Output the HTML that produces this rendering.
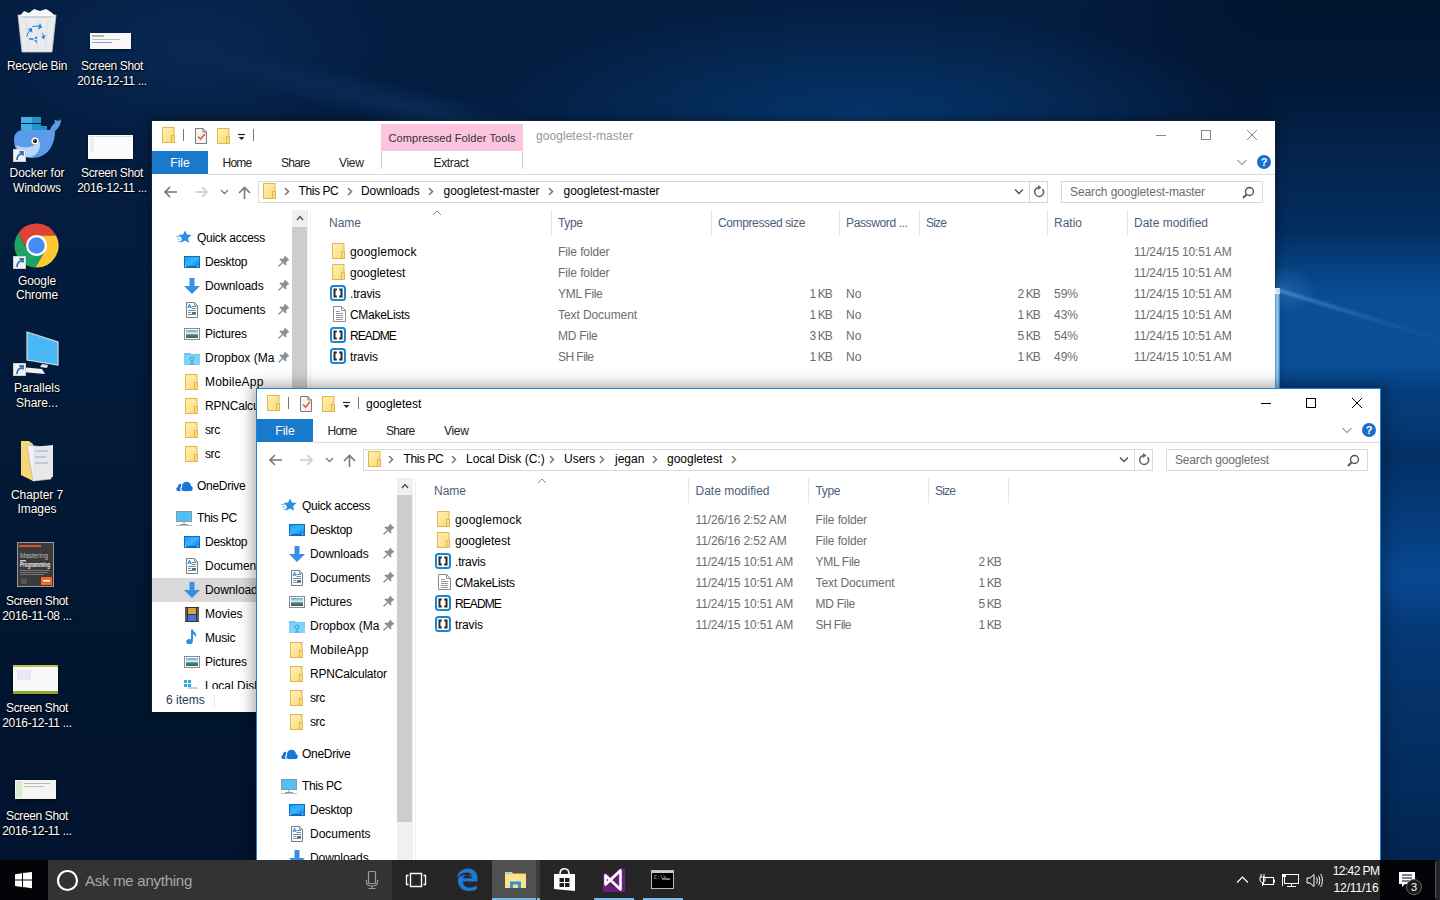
<!DOCTYPE html>
<html><head><meta charset="utf-8"><style>
html,body{margin:0;padding:0;width:1440px;height:900px;overflow:hidden;background:#061a36}
body{position:relative;font-family:'Liberation Sans', sans-serif}
.t{position:absolute;white-space:pre;font-family:'Liberation Sans', sans-serif}
svg{display:block;overflow:visible}
</style></head><body>
<div style="position:absolute;left:0;top:0;width:1440px;height:900px;background:#031c3e;background-image:radial-gradient(ellipse 380px 120px at 860px 125px, rgba(6,60,120,0.8), rgba(6,60,120,0) 100%),radial-gradient(ellipse 260px 200px at 1275px 0px, rgba(0,12,35,0.55), rgba(0,12,35,0) 100%),linear-gradient(180deg, #041e42 0%, #031c3e 30%, #021834 60%, #02142e 85%, #021330 100%);"></div><div style="position:absolute;left:180px;top:20px;width:520px;height:60px;transform:rotate(14deg);transform-origin:0 0;background:radial-gradient(ellipse 260px 22px at 260px 30px, rgba(30,90,170,0.22), rgba(30,90,170,0) 100%);"></div><div style="position:absolute;left:0px;top:0px;width:420px;height:160px;background:radial-gradient(ellipse 200px 100px at 190px 50px, rgba(20,70,140,0.25), rgba(20,70,140,0) 100%);"></div><div style="position:absolute;left:1270px;top:0;width:170px;height:860px;background:linear-gradient(180deg, rgb(0,20,46) 0px, rgb(1,26,58) 100px, rgb(3,35,75) 150px, rgb(4,45,95) 230px, rgb(6,62,125) 262px, rgb(9,78,150) 300px, rgb(9,78,150) 365px, rgb(5,62,125) 390px, rgb(5,58,118) 420px, rgb(3,48,100) 455px, rgb(5,60,125) 520px, rgb(8,72,145) 580px, rgb(5,58,120) 625px, rgb(4,50,104) 700px, rgb(3,42,90) 800px, rgb(3,36,78) 860px);"></div><div style="position:absolute;left:1240px;top:250px;width:120px;height:90px;background:radial-gradient(ellipse 40px 25px at 38px 40px, rgba(90,180,245,0.25), rgba(90,180,245,0) 100%);"></div><svg style="position:absolute;left:17px;top:8px;" width="40" height="46" viewBox="0 0 40 46"><path d="M1 7L39 7L35 44L5 44Z" fill="#e9ebed" stroke="#c4c9cd" stroke-width="0.8"/><path d="M1 7L39 7L33 10L7 10Z" fill="#cfd3d6"/><path d="M3 8L7 3L12 5L17 1L23 3L29 1L34 4L38 8Z" fill="#f7f8f9"/><path d="M20 44L20 12M12 44L9 12M28 44L31 12" stroke="#d6dadd" stroke-width="0.8"/><path d="M9.5 29L13 23L15.5 25L15 20L10.5 21L12.5 22L9 28Z M15 19L22 18.5L21 21.5L25 19.5L23 15L22 17.5L15.5 18Z M24 22L27.5 28L24 28.5L27 31.5L28.5 27L26 28L24.5 22.5Z M12 30L20 31L20 28L16 31.5L20 35L20 32.5L12 31.5Z" fill="#1f80e0"/></svg><div class="t" style="left:7.00px;top:59.34px;font-size:12px;line-height:14px;color:#fff;letter-spacing:-0.305px;text-shadow:0 0 2px #000,1px 1px 1px #000;">Recycle Bin</div><div style="position:absolute;left:90px;top:33px;width:41px;height:16px;background:#f7f7f7;box-shadow:0 1px 2px rgba(0,0,0,0.6)"></div><div style="position:absolute;left:92px;top:35px;width:12px;height:2px;background:#9c9"></div><div style="position:absolute;left:92px;top:39px;width:28px;height:1px;background:#bbb"></div><div style="position:absolute;left:92px;top:42px;width:20px;height:1px;background:#99c"></div><div class="t" style="left:81.00px;top:59.34px;font-size:12px;line-height:14px;color:#fff;letter-spacing:-0.368px;text-shadow:0 0 2px #000,1px 1px 1px #000;">Screen Shot</div><div class="t" style="left:77.25px;top:74.34px;font-size:12px;line-height:14px;color:#fff;letter-spacing:-0.309px;text-shadow:0 0 2px #000,1px 1px 1px #000;">2016-12-11 ...</div><svg style="position:absolute;left:13px;top:116px;" width="48" height="46" viewBox="0 0 48 46"><rect x="8" y="1" width="11" height="6" fill="#3fb2e0"/><rect x="19" y="1" width="9" height="6" fill="#1e94c9"/><rect x="8" y="8" width="11" height="6" fill="#3fb2e0"/><rect x="19" y="8" width="9" height="6" fill="#1e94c9"/><rect x="28" y="10" width="6" height="4" fill="#1e94c9"/><path d="M1 24C1 17 5 14 11 14L37 14C38 11 40 8 42 7C41 5 42 3 43 4C45 6 47 4 48 3C48 8 46 12 42 15C42 31 33 42 19 42C8 42 1 35 1 24Z" fill="#5b9be8"/><path d="M3 29C9 33 20 32 27 26C28 35 22 41 16 41C9 41 5 36 3 29Z" fill="#bcd7fa"/><circle cx="22" cy="25" r="3.6" fill="#fff"/><circle cx="22" cy="25" r="2" fill="#111"/><circle cx="21.3" cy="24.3" r="0.6" fill="#fff"/></svg><div style="position:absolute;left:13px;top:149px;width:13px;height:13px;background:#f2f2f2;border:1px solid #ccc;box-sizing:border-box"></div><svg style="position:absolute;left:14px;top:150px;" width="11" height="11" viewBox="0 0 11 11"><path d="M3 10C3 6 5 4 8 4M5.5 2H9V5.5" fill="none" stroke="#2f6fb8" stroke-width="1.8"/></svg><div class="t" style="left:9.50px;top:166.34px;font-size:12px;line-height:14px;color:#fff;letter-spacing:-0.036px;text-shadow:0 0 2px #000,1px 1px 1px #000;">Docker for</div><div class="t" style="left:13.00px;top:181.34px;font-size:12px;line-height:14px;color:#fff;letter-spacing:-0.098px;text-shadow:0 0 2px #000,1px 1px 1px #000;">Windows</div><div style="position:absolute;left:88px;top:135px;width:45px;height:24px;background:#fbfbfb;box-shadow:0 1px 2px rgba(0,0,0,0.6)"></div><div style="position:absolute;left:89px;top:136px;width:43px;height:1px;background:#ddd"></div><div style="position:absolute;left:90px;top:138px;width:4px;height:14px;background:#eee"></div><div class="t" style="left:81.00px;top:166.34px;font-size:12px;line-height:14px;color:#fff;letter-spacing:-0.368px;text-shadow:0 0 2px #000,1px 1px 1px #000;">Screen Shot</div><div class="t" style="left:77.25px;top:181.34px;font-size:12px;line-height:14px;color:#fff;letter-spacing:-0.309px;text-shadow:0 0 2px #000,1px 1px 1px #000;">2016-12-11 ...</div><svg style="position:absolute;left:14px;top:223px;" width="45" height="45" viewBox="0 0 45 45"><path d="M22.5 12.5L42.1 12.5A22 22 0 0 0 4.04 10.53L13.84 27.5L22.5 22.5Z" fill="#db4437"/><path d="M22.5 12.5L42.1 12.5A22 22 0 0 1 21.36 44.47L31.16 27.5L22.5 22.5Z" fill="#fcc934"/><path d="M31.16 27.5L21.36 44.47A22 22 0 0 1 4.04 10.53L13.84 27.5L22.5 22.5Z" fill="#1da462"/><circle cx="22.5" cy="22.5" r="10.5" fill="#fff"/><circle cx="22.5" cy="22.5" r="8.3" fill="#4a8af4"/></svg><div style="position:absolute;left:13px;top:256px;width:13px;height:13px;background:#f2f2f2;border:1px solid #ccc;box-sizing:border-box"></div><svg style="position:absolute;left:14px;top:257px;" width="11" height="11" viewBox="0 0 11 11"><path d="M3 10C3 6 5 4 8 4M5.5 2H9V5.5" fill="none" stroke="#2f6fb8" stroke-width="1.8"/></svg><div class="t" style="left:18.00px;top:274.34px;font-size:12px;line-height:14px;color:#fff;letter-spacing:-0.117px;text-shadow:0 0 2px #000,1px 1px 1px #000;">Google</div><div class="t" style="left:16.00px;top:288.34px;font-size:12px;line-height:14px;color:#fff;letter-spacing:-0.115px;text-shadow:0 0 2px #000,1px 1px 1px #000;">Chrome</div><svg style="position:absolute;left:18px;top:330px;" width="42" height="46" viewBox="0 0 42 46"><path d="M9 2L40 12V35L9 30Z" fill="#4ab8f5" stroke="#d8dde2" stroke-width="1.2"/><path d="M24 34L30 35L29 38L22 37Z" fill="#dfe3e7"/><path d="M3 37L24 39L27 44L4 42Z" fill="#eef0f2"/></svg><div style="position:absolute;left:13px;top:363px;width:13px;height:13px;background:#f2f2f2;border:1px solid #ccc;box-sizing:border-box"></div><svg style="position:absolute;left:14px;top:364px;" width="11" height="11" viewBox="0 0 11 11"><path d="M3 10C3 6 5 4 8 4M5.5 2H9V5.5" fill="none" stroke="#2f6fb8" stroke-width="1.8"/></svg><div class="t" style="left:14.00px;top:381.34px;font-size:12px;line-height:14px;color:#fff;text-shadow:0 0 2px #000,1px 1px 1px #000;">Parallels</div><div class="t" style="left:16.00px;top:395.84px;font-size:12px;line-height:14px;color:#fff;text-shadow:0 0 2px #000,1px 1px 1px #000;">Share...</div><svg style="position:absolute;left:20px;top:439px;" width="34" height="43" viewBox="0 0 34 43"><path d="M1 2L9 2L13 5L13 42L1 36Z" fill="#f6d774"/><path d="M7 6L31 9L31 40L13 42Z" fill="#f4f4f4" stroke="#bbb" stroke-width="0.8"/><path d="M13 8L33 6L33 38L13 42Z" fill="#e8e8e8"/><path d="M15 12H28M15 18H26M15 24H28" stroke="#7aa0e0" stroke-width="0.8"/></svg><div class="t" style="left:11.00px;top:487.84px;font-size:12px;line-height:14px;color:#fff;letter-spacing:-0.078px;text-shadow:0 0 2px #000,1px 1px 1px #000;">Chapter 7</div><div class="t" style="left:17.50px;top:502.34px;font-size:12px;line-height:14px;color:#fff;letter-spacing:-0.060px;text-shadow:0 0 2px #000,1px 1px 1px #000;">Images</div><svg style="position:absolute;left:17px;top:542px;" width="37" height="45" viewBox="0 0 37 45"><rect x="0.5" y="0.5" width="36" height="44" fill="#3b3b3b" stroke="#9a9a9a"/><rect x="2" y="3" width="22" height="2" fill="#d8572a"/><text x="3" y="16" font-family="Liberation Sans" font-size="7" fill="#bbb" textLength="28" lengthAdjust="spacingAndGlyphs">Mastering</text><rect x="3" y="18" width="6" height="1.5" fill="#ccc"/><text x="3" y="25" font-family="Liberation Sans" font-weight="bold" font-size="6.5" fill="#eee" textLength="30" lengthAdjust="spacingAndGlyphs">Programming</text><rect x="3" y="28" width="30" height="1" fill="#777"/><rect x="3" y="30" width="28" height="1" fill="#777"/><rect x="3" y="32" width="24" height="1" fill="#777"/><rect x="5" y="38" width="4" height="3" fill="none" stroke="#999" stroke-width="0.6"/><rect x="24" y="35" width="11" height="8" fill="#f26a25"/><rect x="26" y="38" width="7" height="1.5" fill="#fff"/></svg><div class="t" style="left:6.00px;top:594.34px;font-size:12px;line-height:14px;color:#fff;letter-spacing:-0.368px;text-shadow:0 0 2px #000,1px 1px 1px #000;">Screen Shot</div><div class="t" style="left:2.25px;top:609.34px;font-size:12px;line-height:14px;color:#fff;letter-spacing:-0.309px;text-shadow:0 0 2px #000,1px 1px 1px #000;">2016-11-08 ...</div><div style="position:absolute;left:13px;top:665px;width:45px;height:29px;background:#f8f8f8;box-shadow:0 1px 2px rgba(0,0,0,0.6)"></div><div style="position:absolute;left:13px;top:665px;width:45px;height:2px;background:#b8c840"></div><div style="position:absolute;left:13px;top:691px;width:45px;height:3px;background:#8aa830"></div><div style="position:absolute;left:17px;top:670px;width:14px;height:10px;background:#e8e8f4"></div><div class="t" style="left:6.00px;top:701.34px;font-size:12px;line-height:14px;color:#fff;letter-spacing:-0.368px;text-shadow:0 0 2px #000,1px 1px 1px #000;">Screen Shot</div><div class="t" style="left:2.25px;top:716.34px;font-size:12px;line-height:14px;color:#fff;letter-spacing:-0.309px;text-shadow:0 0 2px #000,1px 1px 1px #000;">2016-12-11 ...</div><div style="position:absolute;left:15px;top:780px;width:41px;height:19px;background:#f4f4f0;box-shadow:0 1px 2px rgba(0,0,0,0.6)"></div><div style="position:absolute;left:16px;top:781px;width:6px;height:17px;background:#d8ecd0"></div><div style="position:absolute;left:24px;top:783px;width:26px;height:1px;background:#bbb"></div><div style="position:absolute;left:24px;top:786px;width:20px;height:1px;background:#bbb"></div><div class="t" style="left:6.00px;top:808.84px;font-size:12px;line-height:14px;color:#fff;letter-spacing:-0.368px;text-shadow:0 0 2px #000,1px 1px 1px #000;">Screen Shot</div><div class="t" style="left:2.25px;top:823.84px;font-size:12px;line-height:14px;color:#fff;letter-spacing:-0.309px;text-shadow:0 0 2px #000,1px 1px 1px #000;">2016-12-11 ...</div><div style="position:absolute;left:151px;top:120px;width:1125px;height:592px;background:rgba(25,35,50,0.55);box-shadow:0 0 10px 2px rgba(0,0,0,0.25);"></div><div style="position:absolute;left:152px;top:121px;width:1123px;height:591px;background:#fff;overflow:hidden;"><svg style="position:absolute;left:10px;top:6px;" width="14" height="17" viewBox="0 0 14 17"><defs><linearGradient id="fg" x1="0" y1="0" x2="1" y2="1"><stop offset="0" stop-color="#fff0b8"/><stop offset="1" stop-color="#fcd977"/></linearGradient></defs><rect x="0.5" y="0.5" width="11.5" height="15" fill="url(#fg)" stroke="#e3b74c"/><rect x="9.5" y="8.5" width="3" height="7" fill="#fbdc7e" stroke="#e3b74c"/></svg><div style="position:absolute;left:31px;top:8px;width:1px;height:12px;background:#777"></div><svg style="position:absolute;left:43px;top:7px;" width="13" height="17" viewBox="0 0 13 17"><path d="M0.5 0.5H8L11.5 4V15.5H0.5Z" fill="#f3f3f3" stroke="#7a7a7a"/><path d="M8 0.5V4H11.5" fill="none" stroke="#7a7a7a"/><path d="M3 8.5L5.5 11L10 6" fill="none" stroke="#f05a28" stroke-width="1.6"/></svg><svg style="position:absolute;left:65px;top:7px;" width="14" height="17" viewBox="0 0 14 17"><defs><linearGradient id="fg" x1="0" y1="0" x2="1" y2="1"><stop offset="0" stop-color="#fff0b8"/><stop offset="1" stop-color="#fcd977"/></linearGradient></defs><rect x="0.5" y="0.5" width="11.5" height="15" fill="url(#fg)" stroke="#e3b74c"/><rect x="9.5" y="8.5" width="3" height="7" fill="#fbdc7e" stroke="#e3b74c"/></svg><svg style="position:absolute;left:85px;top:12px;" width="9" height="9" viewBox="0 0 9 9"><path d="M1 1.5H8" stroke="#222" stroke-width="1.2"/><path d="M1.5 4H7.5L4.5 7Z" fill="#222"/></svg><div style="position:absolute;left:101px;top:8px;width:1px;height:12px;background:#777"></div><div style="position:absolute;left:229px;top:3px;width:142px;height:27px;background:#fcc4de"></div><div class="t" style="left:236.50px;top:10.69px;font-size:11px;line-height:13px;color:#333;letter-spacing:0.081px;">Compressed Folder Tools</div><div style="position:absolute;left:229px;top:30px;width:1px;height:18px;background:#d0d0d0"></div><div style="position:absolute;left:370px;top:30px;width:1px;height:18px;background:#d0d0d0"></div><div class="t" style="left:281.50px;top:34.84px;font-size:12px;line-height:14px;color:#222;letter-spacing:-0.335px;">Extract</div><div class="t" style="left:384.00px;top:7.84px;font-size:12px;line-height:14px;color:#999;letter-spacing:0.056px;">googletest-master</div><svg style="position:absolute;left:1003px;top:8px;" width="12" height="12" viewBox="0 0 12 12"><path d="M1 6.5H11" stroke="#888" stroke-width="1"/></svg><svg style="position:absolute;left:1048px;top:8px;" width="12" height="12" viewBox="0 0 12 12"><rect x="1.5" y="1.5" width="9" height="9" fill="none" stroke="#888" stroke-width="1"/></svg><svg style="position:absolute;left:1094px;top:8px;" width="12" height="12" viewBox="0 0 12 12"><path d="M1 1L11 11M11 1L1 11" stroke="#888" stroke-width="1"/></svg><div style="position:absolute;left:0px;top:30px;width:56px;height:23px;background:#1979ca"></div><div class="t" style="left:18.33px;top:34.84px;font-size:12px;line-height:14px;color:#fff;">File</div><div class="t" style="left:70.50px;top:34.84px;font-size:12px;line-height:14px;color:#222;letter-spacing:-0.754px;">Home</div><div class="t" style="left:129.00px;top:34.84px;font-size:12px;line-height:14px;color:#222;letter-spacing:-0.706px;">Share</div><div class="t" style="left:187.00px;top:34.84px;font-size:12px;line-height:14px;color:#222;letter-spacing:-0.299px;">View</div><div style="position:absolute;left:56px;top:53px;width:1067px;height:1px;background:#dadbdc"></div><svg style="position:absolute;left:1084px;top:37px;" width="12" height="10" viewBox="0 0 12 10"><path d="M1.5 2L6 6.5L10.5 2" fill="none" stroke="#a8a8a8" stroke-width="1.3"/></svg><svg style="position:absolute;left:1103px;top:32px;" width="18" height="18" viewBox="0 0 18 18"><circle cx="9" cy="9" r="7" fill="#1a6dcc"/><text x="9" y="13" text-anchor="middle" font-family="Liberation Sans" font-weight="bold" font-size="11" fill="#fff">?</text></svg><svg style="position:absolute;left:12px;top:65px;" width="14" height="12" viewBox="0 0 14 12"><path d="M1 6H13M6 1L1 6L6 11" fill="none" stroke="#777" stroke-width="1.6"/></svg><svg style="position:absolute;left:42px;top:65px;" width="14" height="12" viewBox="0 0 14 12"><path d="M1 6H13M8 1L13 6L8 11" fill="none" stroke="#ccc" stroke-width="1.6"/></svg><svg style="position:absolute;left:68px;top:68px;" width="9" height="6" viewBox="0 0 9 6"><path d="M1 1L4.5 4.5L8 1" fill="none" stroke="#777" stroke-width="1.3"/></svg><svg style="position:absolute;left:86px;top:65px;" width="13" height="13" viewBox="0 0 13 13"><path d="M6.5 13V1.5M1 7L6.5 1.5L12 7" fill="none" stroke="#777" stroke-width="1.6"/></svg><div style="position:absolute;left:106px;top:60px;width:790px;height:22px;border:1px solid #d9d9d9;box-sizing:border-box"></div><div style="position:absolute;left:877px;top:60px;width:1px;height:22px;background:#d9d9d9"></div><svg style="position:absolute;left:862px;top:67px;" width="10" height="8" viewBox="0 0 10 8"><path d="M1 1.5L5 5.5L9 1.5" fill="none" stroke="#555" stroke-width="1.5"/></svg><svg style="position:absolute;left:880px;top:64px;" width="14" height="14" viewBox="0 0 14 14"><path d="M10.5 4A4.5 4.5 0 1 1 7 2.5" fill="none" stroke="#666" stroke-width="1.5"/><path d="M6 0L9.5 2.5L6 5Z" fill="#666"/></svg><svg style="position:absolute;left:111px;top:62px;" width="14" height="17" viewBox="0 0 14 17"><defs><linearGradient id="fg" x1="0" y1="0" x2="1" y2="1"><stop offset="0" stop-color="#fff0b8"/><stop offset="1" stop-color="#fcd977"/></linearGradient></defs><rect x="0.5" y="0.5" width="11.5" height="15" fill="url(#fg)" stroke="#e3b74c"/><rect x="9.5" y="8.5" width="3" height="7" fill="#fbdc7e" stroke="#e3b74c"/></svg><svg style="position:absolute;left:131.5px;top:66px;" width="6" height="9" viewBox="0 0 6 9"><path d="M1 1L4.5 4.5L1 8" fill="none" stroke="#777" stroke-width="1.5"/></svg><div class="t" style="left:146.50px;top:62.84px;font-size:12px;line-height:14px;color:#000;letter-spacing:-0.413px;">This PC</div><svg style="position:absolute;left:194.5px;top:66px;" width="6" height="9" viewBox="0 0 6 9"><path d="M1 1L4.5 4.5L1 8" fill="none" stroke="#777" stroke-width="1.5"/></svg><div class="t" style="left:209.00px;top:62.84px;font-size:12px;line-height:14px;color:#000;letter-spacing:-0.086px;">Downloads</div><svg style="position:absolute;left:275.5px;top:66px;" width="6" height="9" viewBox="0 0 6 9"><path d="M1 1L4.5 4.5L1 8" fill="none" stroke="#777" stroke-width="1.5"/></svg><div class="t" style="left:291.50px;top:62.84px;font-size:12px;line-height:14px;color:#000;">googletest-master</div><svg style="position:absolute;left:395.5px;top:66px;" width="6" height="9" viewBox="0 0 6 9"><path d="M1 1L4.5 4.5L1 8" fill="none" stroke="#777" stroke-width="1.5"/></svg><div class="t" style="left:411.50px;top:62.84px;font-size:12px;line-height:14px;color:#000;">googletest-master</div><div style="position:absolute;left:909px;top:60px;width:202px;height:22px;border:1px solid #d9d9d9;box-sizing:border-box"></div><div class="t" style="left:918.00px;top:63.84px;font-size:12px;line-height:14px;color:#6d6d6d;letter-spacing:-0.100px;">Search googletest-master</div><svg style="position:absolute;left:1090px;top:65px;" width="13" height="13" viewBox="0 0 13 13"><circle cx="7.5" cy="5.5" r="4" fill="none" stroke="#555" stroke-width="1.4"/><path d="M4.5 8.5L1 12" stroke="#555" stroke-width="1.8"/></svg><div style="position:absolute;left:0px;top:89px;width:140px;height:479px;overflow:hidden"><svg style="position:absolute;left:22px;top:20px;" width="18" height="14" viewBox="0 0 18 14"><path d="M11 0.5L12.9 4.6L17.5 5L14 8.2L15.2 12.8L11 10.4L6.8 12.8L7.9 8.2L4.5 5L9.1 4.6Z" fill="#2a8ee8"/><path d="M2 6.5H5.5M3 9H6.5M4 11.5H7" stroke="#7cbdf2" stroke-width="1"/></svg><div class="t" style="left:45.00px;top:20.84px;font-size:12px;line-height:14px;color:#000;letter-spacing:-0.280px;">Quick access</div><svg style="position:absolute;left:32px;top:46px;" width="16" height="12" viewBox="0 0 16 12"><defs><linearGradient id="dg" x1="0" y1="0" x2="1" y2="1"><stop offset="0" stop-color="#1aa0f5"/><stop offset="0.5" stop-color="#3bb4ff"/><stop offset="1" stop-color="#1483e0"/></linearGradient></defs><rect x="0" y="0" width="16" height="12" fill="#0e6cc2"/><rect x="1" y="1" width="14" height="9" fill="url(#dg)"/><rect x="1" y="10" width="1" height="1" fill="#fff"/><rect x="13" y="10" width="1" height="1" fill="#fff"/></svg><div class="t" style="left:53.00px;top:44.84px;font-size:12px;line-height:14px;color:#000;letter-spacing:-0.247px;">Desktop</div><svg style="position:absolute;left:126px;top:45px;" width="12" height="12" viewBox="0 0 12 12"><path d="M7 0.5L11.5 5L10 5.5L8 7.5L8.5 10L7.5 10.5L1.5 4.5L2 3.5L4.5 4L6.5 2Z" fill="#8a9299"/><path d="M4.5 7.5L0.5 11.5" stroke="#8a9299" stroke-width="1.4"/></svg><svg style="position:absolute;left:32px;top:68px;" width="16" height="16" viewBox="0 0 16 16"><path d="M5.5 0H10.5V8H16L8 16L0 8H5.5Z" fill="#3b8ee6"/></svg><div class="t" style="left:53.00px;top:68.84px;font-size:12px;line-height:14px;color:#000;letter-spacing:-0.086px;">Downloads</div><svg style="position:absolute;left:126px;top:69px;" width="12" height="12" viewBox="0 0 12 12"><path d="M7 0.5L11.5 5L10 5.5L8 7.5L8.5 10L7.5 10.5L1.5 4.5L2 3.5L4.5 4L6.5 2Z" fill="#8a9299"/><path d="M4.5 7.5L0.5 11.5" stroke="#8a9299" stroke-width="1.4"/></svg><svg style="position:absolute;left:34px;top:92px;" width="12" height="16" viewBox="0 0 12 16"><path d="M0.5 0.5H8.5L11.5 3.5V15.5H0.5Z" fill="#fff" stroke="#7d7d7d"/><path d="M8.5 0.5V3.5H11.5" fill="none" stroke="#9d9d9d"/><path d="M2 6L3.5 2L5 6M2.5 4.8H4.5" fill="none" stroke="#2b7fd4" stroke-width="1"/><path d="M5.5 4.5H10M5.5 6.5H10M2 8.5H10M2 10.5H5M2 12.5H10" stroke="#6a8fb8" stroke-width="1"/><rect x="6" y="10" width="4" height="2" fill="#4d7a58"/></svg><div class="t" style="left:53.00px;top:92.84px;font-size:12px;line-height:14px;color:#000;letter-spacing:-0.023px;">Documents</div><svg style="position:absolute;left:126px;top:93px;" width="12" height="12" viewBox="0 0 12 12"><path d="M7 0.5L11.5 5L10 5.5L8 7.5L8.5 10L7.5 10.5L1.5 4.5L2 3.5L4.5 4L6.5 2Z" fill="#8a9299"/><path d="M4.5 7.5L0.5 11.5" stroke="#8a9299" stroke-width="1.4"/></svg><svg style="position:absolute;left:32px;top:118px;" width="16" height="12" viewBox="0 0 16 12"><rect x="0.5" y="0.5" width="15" height="11" fill="#fff" stroke="#8a8a8a"/><defs><linearGradient id="pg" x1="0" y1="0" x2="0" y2="1"><stop offset="0" stop-color="#5aa6e8"/><stop offset="0.45" stop-color="#d8ecf8"/><stop offset="0.6" stop-color="#5a8c4a"/><stop offset="1" stop-color="#2f5a7a"/></linearGradient></defs><rect x="2" y="2" width="12" height="8" fill="url(#pg)"/></svg><div class="t" style="left:53.00px;top:116.84px;font-size:12px;line-height:14px;color:#000;letter-spacing:-0.207px;">Pictures</div><svg style="position:absolute;left:126px;top:117px;" width="12" height="12" viewBox="0 0 12 12"><path d="M7 0.5L11.5 5L10 5.5L8 7.5L8.5 10L7.5 10.5L1.5 4.5L2 3.5L4.5 4L6.5 2Z" fill="#8a9299"/><path d="M4.5 7.5L0.5 11.5" stroke="#8a9299" stroke-width="1.4"/></svg><svg style="position:absolute;left:32px;top:142px;" width="16" height="13" viewBox="0 0 16 13"><path d="M0 1H6L7 2H16V13H0Z" fill="#6ccaf2"/><rect x="0" y="3" width="16" height="10" fill="#7fd3f7"/><circle cx="8" cy="7" r="2" fill="none" stroke="#3aa0d0" stroke-width="1"/><path d="M8 9V12M6 12H10" stroke="#3aa0d0"/></svg><div class="t" style="left:53.00px;top:140.84px;font-size:12px;line-height:14px;color:#000;">Dropbox (Ma</div><svg style="position:absolute;left:126px;top:141px;" width="12" height="12" viewBox="0 0 12 12"><path d="M7 0.5L11.5 5L10 5.5L8 7.5L8.5 10L7.5 10.5L1.5 4.5L2 3.5L4.5 4L6.5 2Z" fill="#8a9299"/><path d="M4.5 7.5L0.5 11.5" stroke="#8a9299" stroke-width="1.4"/></svg><svg style="position:absolute;left:33px;top:164px;" width="14" height="17" viewBox="0 0 14 17"><defs><linearGradient id="fg" x1="0" y1="0" x2="1" y2="1"><stop offset="0" stop-color="#fff0b8"/><stop offset="1" stop-color="#fcd977"/></linearGradient></defs><rect x="0.5" y="0.5" width="11.5" height="15" fill="url(#fg)" stroke="#e3b74c"/><rect x="9.5" y="8.5" width="3" height="7" fill="#fbdc7e" stroke="#e3b74c"/></svg><div class="t" style="left:53.00px;top:164.84px;font-size:12px;line-height:14px;color:#000;letter-spacing:0.211px;">MobileApp</div><svg style="position:absolute;left:33px;top:188px;" width="14" height="17" viewBox="0 0 14 17"><defs><linearGradient id="fg" x1="0" y1="0" x2="1" y2="1"><stop offset="0" stop-color="#fff0b8"/><stop offset="1" stop-color="#fcd977"/></linearGradient></defs><rect x="0.5" y="0.5" width="11.5" height="15" fill="url(#fg)" stroke="#e3b74c"/><rect x="9.5" y="8.5" width="3" height="7" fill="#fbdc7e" stroke="#e3b74c"/></svg><div class="t" style="left:53.00px;top:188.84px;font-size:12px;line-height:14px;color:#000;letter-spacing:-0.205px;">RPNCalculator</div><svg style="position:absolute;left:33px;top:212px;" width="14" height="17" viewBox="0 0 14 17"><defs><linearGradient id="fg" x1="0" y1="0" x2="1" y2="1"><stop offset="0" stop-color="#fff0b8"/><stop offset="1" stop-color="#fcd977"/></linearGradient></defs><rect x="0.5" y="0.5" width="11.5" height="15" fill="url(#fg)" stroke="#e3b74c"/><rect x="9.5" y="8.5" width="3" height="7" fill="#fbdc7e" stroke="#e3b74c"/></svg><div class="t" style="left:53.00px;top:212.84px;font-size:12px;line-height:14px;color:#000;letter-spacing:-0.433px;">src</div><svg style="position:absolute;left:33px;top:236px;" width="14" height="17" viewBox="0 0 14 17"><defs><linearGradient id="fg" x1="0" y1="0" x2="1" y2="1"><stop offset="0" stop-color="#fff0b8"/><stop offset="1" stop-color="#fcd977"/></linearGradient></defs><rect x="0.5" y="0.5" width="11.5" height="15" fill="url(#fg)" stroke="#e3b74c"/><rect x="9.5" y="8.5" width="3" height="7" fill="#fbdc7e" stroke="#e3b74c"/></svg><div class="t" style="left:53.00px;top:236.84px;font-size:12px;line-height:14px;color:#000;letter-spacing:-0.433px;">src</div><svg style="position:absolute;left:24px;top:271px;" width="17" height="11" viewBox="0 0 17 11"><g fill="#1a78d4"><circle cx="5" cy="6" r="3.2"/><circle cx="2.3" cy="8" r="2.1"/><rect x="2.3" y="7" width="6" height="3.1"/></g><g fill="#fff"><circle cx="10.5" cy="5" r="5.5"/><circle cx="7.2" cy="8" r="3"/></g><g fill="#1a78d4"><circle cx="10.5" cy="5.2" r="4.5"/><circle cx="14" cy="7.4" r="2.7"/><circle cx="7.4" cy="8" r="2.1"/><rect x="7.4" y="6.5" width="6.6" height="3.6"/></g></svg><div class="t" style="left:45.00px;top:268.84px;font-size:12px;line-height:14px;color:#000;letter-spacing:-0.286px;">OneDrive</div><svg style="position:absolute;left:24px;top:301px;" width="16" height="15" viewBox="0 0 16 15"><rect x="0.5" y="0.5" width="15" height="10" fill="#52c0f8" stroke="#8c99a3"/><path d="M8 11V13" stroke="#8c99a3"/><path d="M4 13.5H12" stroke="#8c99a3"/><path d="M0 14.5H16" stroke="#b8c2c9"/></svg><div class="t" style="left:45.00px;top:300.84px;font-size:12px;line-height:14px;color:#000;letter-spacing:-0.413px;">This PC</div><svg style="position:absolute;left:32px;top:326px;" width="16" height="12" viewBox="0 0 16 12"><defs><linearGradient id="dg" x1="0" y1="0" x2="1" y2="1"><stop offset="0" stop-color="#1aa0f5"/><stop offset="0.5" stop-color="#3bb4ff"/><stop offset="1" stop-color="#1483e0"/></linearGradient></defs><rect x="0" y="0" width="16" height="12" fill="#0e6cc2"/><rect x="1" y="1" width="14" height="9" fill="url(#dg)"/><rect x="1" y="10" width="1" height="1" fill="#fff"/><rect x="13" y="10" width="1" height="1" fill="#fff"/></svg><div class="t" style="left:53.00px;top:324.84px;font-size:12px;line-height:14px;color:#000;letter-spacing:-0.247px;">Desktop</div><svg style="position:absolute;left:34px;top:348px;" width="12" height="16" viewBox="0 0 12 16"><path d="M0.5 0.5H8.5L11.5 3.5V15.5H0.5Z" fill="#fff" stroke="#7d7d7d"/><path d="M8.5 0.5V3.5H11.5" fill="none" stroke="#9d9d9d"/><path d="M2 6L3.5 2L5 6M2.5 4.8H4.5" fill="none" stroke="#2b7fd4" stroke-width="1"/><path d="M5.5 4.5H10M5.5 6.5H10M2 8.5H10M2 10.5H5M2 12.5H10" stroke="#6a8fb8" stroke-width="1"/><rect x="6" y="10" width="4" height="2" fill="#4d7a58"/></svg><div class="t" style="left:53.00px;top:348.84px;font-size:12px;line-height:14px;color:#000;letter-spacing:-0.023px;">Documents</div><div style="position:absolute;left:0px;top:368px;width:140px;height:24px;background:#d9d9d9"></div><svg style="position:absolute;left:32px;top:372px;" width="16" height="16" viewBox="0 0 16 16"><path d="M5.5 0H10.5V8H16L8 16L0 8H5.5Z" fill="#3b8ee6"/></svg><div class="t" style="left:53.00px;top:372.84px;font-size:12px;line-height:14px;color:#000;letter-spacing:-0.086px;">Downloads</div><svg style="position:absolute;left:33px;top:397px;" width="14" height="15" viewBox="0 0 14 15"><rect x="0" y="0" width="14" height="15" fill="#333"/><rect x="3" y="1" width="8" height="6" fill="#d9a53a"/><rect x="3" y="8" width="8" height="6" fill="#3a7ad0"/><path d="M1 1.5V14M13 1.5V14" stroke="#ddd" stroke-width="1" stroke-dasharray="1 1"/></svg><div class="t" style="left:53.00px;top:396.84px;font-size:12px;line-height:14px;color:#000;letter-spacing:-0.103px;">Movies</div><svg style="position:absolute;left:34px;top:419px;" width="12" height="16" viewBox="0 0 12 16"><path d="M6 0.5V12" stroke="#2b8de6" stroke-width="2"/><ellipse cx="3.5" cy="12.5" rx="3.3" ry="2.6" fill="#2b8de6"/><path d="M6.5 1C9 3 11 5 10 9C9.8 7 8.5 5.5 6.5 5" fill="#2b8de6"/></svg><div class="t" style="left:53.00px;top:420.84px;font-size:12px;line-height:14px;color:#000;letter-spacing:-0.189px;">Music</div><svg style="position:absolute;left:32px;top:446px;" width="16" height="12" viewBox="0 0 16 12"><rect x="0.5" y="0.5" width="15" height="11" fill="#fff" stroke="#8a8a8a"/><defs><linearGradient id="pg" x1="0" y1="0" x2="0" y2="1"><stop offset="0" stop-color="#5aa6e8"/><stop offset="0.45" stop-color="#d8ecf8"/><stop offset="0.6" stop-color="#5a8c4a"/><stop offset="1" stop-color="#2f5a7a"/></linearGradient></defs><rect x="2" y="2" width="12" height="8" fill="url(#pg)"/></svg><div class="t" style="left:53.00px;top:444.84px;font-size:12px;line-height:14px;color:#000;letter-spacing:-0.207px;">Pictures</div><svg style="position:absolute;left:32px;top:470px;" width="16" height="10" viewBox="0 0 16 10"><rect x="0" y="0" width="3" height="3" fill="#1fb3f5"/><rect x="4" y="0" width="3" height="3" fill="#1fb3f5"/><rect x="0" y="4" width="3" height="3" fill="#1fb3f5"/><rect x="4" y="4" width="3" height="3" fill="#1fb3f5"/><path d="M3 10L5 7H13L15 10Z" fill="#c9ced3"/></svg><div class="t" style="left:53.00px;top:468.84px;font-size:12px;line-height:14px;color:#000;">Local Disk</div></div><div style="position:absolute;left:140px;top:89px;width:16px;height:502px;background:#f0f0f0"></div><div style="position:absolute;left:140px;top:106px;width:15px;height:600px;background:#cdcdcd"></div><svg style="position:absolute;left:144px;top:94px;" width="8" height="6" viewBox="0 0 8 6"><path d="M1 5L4 1.5L7 5" fill="none" stroke="#505050" stroke-width="1.4"/></svg><div style="position:absolute;left:158px;top:89px;width:1px;height:502px;background:#f0f0f0"></div><div class="t" style="left:177.00px;top:94.84px;font-size:12px;line-height:14px;color:#4c607a;">Name</div><div style="position:absolute;left:399px;top:89px;width:1px;height:25px;background:#e5e5e5"></div><div class="t" style="left:406.00px;top:94.84px;font-size:12px;line-height:14px;color:#4c607a;letter-spacing:-0.379px;">Type</div><div style="position:absolute;left:559px;top:89px;width:1px;height:25px;background:#e5e5e5"></div><div class="t" style="left:566.00px;top:94.84px;font-size:12px;line-height:14px;color:#4c607a;letter-spacing:-0.380px;">Compressed size</div><div style="position:absolute;left:687px;top:89px;width:1px;height:25px;background:#e5e5e5"></div><div class="t" style="left:694.00px;top:94.84px;font-size:12px;line-height:14px;color:#4c607a;letter-spacing:-0.369px;">Password ...</div><div style="position:absolute;left:767px;top:89px;width:1px;height:25px;background:#e5e5e5"></div><div class="t" style="left:774.00px;top:94.84px;font-size:12px;line-height:14px;color:#4c607a;letter-spacing:-0.836px;">Size</div><div style="position:absolute;left:895px;top:89px;width:1px;height:25px;background:#e5e5e5"></div><div class="t" style="left:902.00px;top:94.84px;font-size:12px;line-height:14px;color:#4c607a;">Ratio</div><div style="position:absolute;left:975px;top:89px;width:1px;height:25px;background:#e5e5e5"></div><div class="t" style="left:982.00px;top:94.84px;font-size:12px;line-height:14px;color:#4c607a;">Date modified</div><svg style="position:absolute;left:280px;top:89px;" width="10" height="6" viewBox="0 0 10 6"><path d="M1 5L5 1L9 5" fill="none" stroke="#8a8a8a" stroke-width="1"/></svg><svg style="position:absolute;left:180px;top:122px;" width="14" height="17" viewBox="0 0 14 17"><defs><linearGradient id="fg" x1="0" y1="0" x2="1" y2="1"><stop offset="0" stop-color="#fff0b8"/><stop offset="1" stop-color="#fcd977"/></linearGradient></defs><rect x="0.5" y="0.5" width="11.5" height="15" fill="url(#fg)" stroke="#e3b74c"/><rect x="9.5" y="8.5" width="3" height="7" fill="#fbdc7e" stroke="#e3b74c"/></svg><div class="t" style="left:198.00px;top:123.84px;font-size:12px;line-height:14px;color:#000;letter-spacing:0.188px;">googlemock</div><div class="t" style="left:406.00px;top:123.84px;font-size:12px;line-height:14px;color:#6d6d6d;letter-spacing:-0.108px;">File folder</div><div class="t" style="left:982.00px;top:123.84px;font-size:12px;line-height:14px;color:#6d6d6d;letter-spacing:-0.139px;">11/24/15 10:51 AM</div><svg style="position:absolute;left:180px;top:143px;" width="14" height="17" viewBox="0 0 14 17"><defs><linearGradient id="fg" x1="0" y1="0" x2="1" y2="1"><stop offset="0" stop-color="#fff0b8"/><stop offset="1" stop-color="#fcd977"/></linearGradient></defs><rect x="0.5" y="0.5" width="11.5" height="15" fill="url(#fg)" stroke="#e3b74c"/><rect x="9.5" y="8.5" width="3" height="7" fill="#fbdc7e" stroke="#e3b74c"/></svg><div class="t" style="left:198.00px;top:144.84px;font-size:12px;line-height:14px;color:#000;">googletest</div><div class="t" style="left:406.00px;top:144.84px;font-size:12px;line-height:14px;color:#6d6d6d;letter-spacing:-0.108px;">File folder</div><div class="t" style="left:982.00px;top:144.84px;font-size:12px;line-height:14px;color:#6d6d6d;letter-spacing:-0.139px;">11/24/15 10:51 AM</div><svg style="position:absolute;left:178px;top:164px;" width="16" height="16" viewBox="0 0 16 16"><rect x="1" y="1" width="14" height="14" rx="2.5" fill="#fff" stroke="#1787d6" stroke-width="2"/><path d="M6.8 4.5H4.5V11.5H6.8M9.2 4.5H11.5V11.5H9.2" fill="none" stroke="#2b2b2b" stroke-width="2"/></svg><div class="t" style="left:198.00px;top:165.84px;font-size:12px;line-height:14px;color:#000;letter-spacing:-0.202px;">.travis</div><div class="t" style="left:406.00px;top:165.84px;font-size:12px;line-height:14px;color:#6d6d6d;letter-spacing:-0.301px;">YML File</div><div class="t" style="left:657.50px;top:165.84px;font-size:12px;line-height:14px;color:#6d6d6d;letter-spacing:-0.879px;">1 KB</div><div class="t" style="left:694.00px;top:165.84px;font-size:12px;line-height:14px;color:#6d6d6d;">No</div><div class="t" style="left:865.50px;top:165.84px;font-size:12px;line-height:14px;color:#6d6d6d;letter-spacing:-0.879px;">2 KB</div><div class="t" style="left:902.00px;top:165.84px;font-size:12px;line-height:14px;color:#6d6d6d;">59%</div><div class="t" style="left:982.00px;top:165.84px;font-size:12px;line-height:14px;color:#6d6d6d;letter-spacing:-0.139px;">11/24/15 10:51 AM</div><svg style="position:absolute;left:181px;top:185px;" width="13" height="16" viewBox="0 0 13 16"><path d="M0.5 0.5H8.5L12.5 4.5V15.5H0.5Z" fill="#fff" stroke="#8c8c8c"/><path d="M8.5 0.5V4.5H12.5" fill="none" stroke="#8c8c8c"/><path d="M3 5.5H7M3 7.5H10M3 9.5H10M3 11.5H10M3 13.5H10" stroke="#9a9a9a" stroke-width="1"/></svg><div class="t" style="left:198.00px;top:186.84px;font-size:12px;line-height:14px;color:#000;letter-spacing:-0.299px;">CMakeLists</div><div class="t" style="left:406.00px;top:186.84px;font-size:12px;line-height:14px;color:#6d6d6d;letter-spacing:-0.081px;">Text Document</div><div class="t" style="left:657.50px;top:186.84px;font-size:12px;line-height:14px;color:#6d6d6d;letter-spacing:-0.879px;">1 KB</div><div class="t" style="left:694.00px;top:186.84px;font-size:12px;line-height:14px;color:#6d6d6d;">No</div><div class="t" style="left:865.50px;top:186.84px;font-size:12px;line-height:14px;color:#6d6d6d;letter-spacing:-0.879px;">1 KB</div><div class="t" style="left:902.00px;top:186.84px;font-size:12px;line-height:14px;color:#6d6d6d;">43%</div><div class="t" style="left:982.00px;top:186.84px;font-size:12px;line-height:14px;color:#6d6d6d;letter-spacing:-0.139px;">11/24/15 10:51 AM</div><svg style="position:absolute;left:178px;top:206px;" width="16" height="16" viewBox="0 0 16 16"><rect x="1" y="1" width="14" height="14" rx="2.5" fill="#fff" stroke="#1787d6" stroke-width="2"/><path d="M6.8 4.5H4.5V11.5H6.8M9.2 4.5H11.5V11.5H9.2" fill="none" stroke="#2b2b2b" stroke-width="2"/></svg><div class="t" style="left:198.00px;top:207.84px;font-size:12px;line-height:14px;color:#000;letter-spacing:-0.924px;">README</div><div class="t" style="left:406.00px;top:207.84px;font-size:12px;line-height:14px;color:#6d6d6d;letter-spacing:-0.263px;">MD File</div><div class="t" style="left:657.50px;top:207.84px;font-size:12px;line-height:14px;color:#6d6d6d;letter-spacing:-0.879px;">3 KB</div><div class="t" style="left:694.00px;top:207.84px;font-size:12px;line-height:14px;color:#6d6d6d;">No</div><div class="t" style="left:865.50px;top:207.84px;font-size:12px;line-height:14px;color:#6d6d6d;letter-spacing:-0.879px;">5 KB</div><div class="t" style="left:902.00px;top:207.84px;font-size:12px;line-height:14px;color:#6d6d6d;">54%</div><div class="t" style="left:982.00px;top:207.84px;font-size:12px;line-height:14px;color:#6d6d6d;letter-spacing:-0.139px;">11/24/15 10:51 AM</div><svg style="position:absolute;left:178px;top:227px;" width="16" height="16" viewBox="0 0 16 16"><rect x="1" y="1" width="14" height="14" rx="2.5" fill="#fff" stroke="#1787d6" stroke-width="2"/><path d="M6.8 4.5H4.5V11.5H6.8M9.2 4.5H11.5V11.5H9.2" fill="none" stroke="#2b2b2b" stroke-width="2"/></svg><div class="t" style="left:198.00px;top:228.84px;font-size:12px;line-height:14px;color:#000;letter-spacing:-0.145px;">travis</div><div class="t" style="left:406.00px;top:228.84px;font-size:12px;line-height:14px;color:#6d6d6d;letter-spacing:-0.549px;">SH File</div><div class="t" style="left:657.50px;top:228.84px;font-size:12px;line-height:14px;color:#6d6d6d;letter-spacing:-0.879px;">1 KB</div><div class="t" style="left:694.00px;top:228.84px;font-size:12px;line-height:14px;color:#6d6d6d;">No</div><div class="t" style="left:865.50px;top:228.84px;font-size:12px;line-height:14px;color:#6d6d6d;letter-spacing:-0.879px;">1 KB</div><div class="t" style="left:902.00px;top:228.84px;font-size:12px;line-height:14px;color:#6d6d6d;">49%</div><div class="t" style="left:982.00px;top:228.84px;font-size:12px;line-height:14px;color:#6d6d6d;letter-spacing:-0.139px;">11/24/15 10:51 AM</div><div class="t" style="left:14.00px;top:572.34px;font-size:12px;line-height:14px;color:#1e395b;">6 items</div><div style="position:absolute;left:62px;top:574px;width:1px;height:12px;background:#e8e8e8"></div></div><div style="position:absolute;left:1275px;top:289px;width:5px;height:100px;background:linear-gradient(90deg,rgba(70,150,215,0.9),rgba(175,220,245,0.95) 45%,rgba(60,140,210,0.7));"></div><div style="position:absolute;left:1275px;top:288px;width:5px;height:6px;background:rgba(225,240,245,0.95)"></div><div style="position:absolute;left:1278px;top:288px;width:180px;height:4px;transform:rotate(17deg);transform-origin:0 0;filter:blur(1.2px);background:linear-gradient(90deg,rgba(110,185,240,0.45),rgba(110,185,240,0.12) 60%,rgba(110,185,240,0));"></div><div style="position:absolute;left:256px;top:388px;width:1125px;height:521px;background:#1883d7;box-shadow:0 0 14px 3px rgba(0,0,0,0.35);"></div><div style="position:absolute;left:257px;top:389px;width:1123px;height:520px;background:#fff;overflow:hidden;"><svg style="position:absolute;left:10px;top:6px;" width="14" height="17" viewBox="0 0 14 17"><defs><linearGradient id="fg" x1="0" y1="0" x2="1" y2="1"><stop offset="0" stop-color="#fff0b8"/><stop offset="1" stop-color="#fcd977"/></linearGradient></defs><rect x="0.5" y="0.5" width="11.5" height="15" fill="url(#fg)" stroke="#e3b74c"/><rect x="9.5" y="8.5" width="3" height="7" fill="#fbdc7e" stroke="#e3b74c"/></svg><div style="position:absolute;left:31px;top:8px;width:1px;height:12px;background:#777"></div><svg style="position:absolute;left:43px;top:7px;" width="13" height="17" viewBox="0 0 13 17"><path d="M0.5 0.5H8L11.5 4V15.5H0.5Z" fill="#f3f3f3" stroke="#7a7a7a"/><path d="M8 0.5V4H11.5" fill="none" stroke="#7a7a7a"/><path d="M3 8.5L5.5 11L10 6" fill="none" stroke="#f05a28" stroke-width="1.6"/></svg><svg style="position:absolute;left:65px;top:7px;" width="14" height="17" viewBox="0 0 14 17"><defs><linearGradient id="fg" x1="0" y1="0" x2="1" y2="1"><stop offset="0" stop-color="#fff0b8"/><stop offset="1" stop-color="#fcd977"/></linearGradient></defs><rect x="0.5" y="0.5" width="11.5" height="15" fill="url(#fg)" stroke="#e3b74c"/><rect x="9.5" y="8.5" width="3" height="7" fill="#fbdc7e" stroke="#e3b74c"/></svg><svg style="position:absolute;left:85px;top:12px;" width="9" height="9" viewBox="0 0 9 9"><path d="M1 1.5H8" stroke="#222" stroke-width="1.2"/><path d="M1.5 4H7.5L4.5 7Z" fill="#222"/></svg><div style="position:absolute;left:101px;top:8px;width:1px;height:12px;background:#777"></div><div class="t" style="left:109.00px;top:7.84px;font-size:12px;line-height:14px;color:#000;">googletest</div><svg style="position:absolute;left:1003px;top:8px;" width="12" height="12" viewBox="0 0 12 12"><path d="M1 6.5H11" stroke="#000" stroke-width="1"/></svg><svg style="position:absolute;left:1048px;top:8px;" width="12" height="12" viewBox="0 0 12 12"><rect x="1.5" y="1.5" width="9" height="9" fill="none" stroke="#000" stroke-width="1"/></svg><svg style="position:absolute;left:1094px;top:8px;" width="12" height="12" viewBox="0 0 12 12"><path d="M1 1L11 11M11 1L1 11" stroke="#000" stroke-width="1"/></svg><div style="position:absolute;left:0px;top:30px;width:56px;height:23px;background:#1979ca"></div><div class="t" style="left:18.33px;top:34.84px;font-size:12px;line-height:14px;color:#fff;">File</div><div class="t" style="left:70.50px;top:34.84px;font-size:12px;line-height:14px;color:#222;letter-spacing:-0.754px;">Home</div><div class="t" style="left:129.00px;top:34.84px;font-size:12px;line-height:14px;color:#222;letter-spacing:-0.706px;">Share</div><div class="t" style="left:187.00px;top:34.84px;font-size:12px;line-height:14px;color:#222;letter-spacing:-0.299px;">View</div><div style="position:absolute;left:56px;top:53px;width:1067px;height:1px;background:#dadbdc"></div><svg style="position:absolute;left:1084px;top:37px;" width="12" height="10" viewBox="0 0 12 10"><path d="M1.5 2L6 6.5L10.5 2" fill="none" stroke="#a8a8a8" stroke-width="1.3"/></svg><svg style="position:absolute;left:1103px;top:32px;" width="18" height="18" viewBox="0 0 18 18"><circle cx="9" cy="9" r="7" fill="#1a6dcc"/><text x="9" y="13" text-anchor="middle" font-family="Liberation Sans" font-weight="bold" font-size="11" fill="#fff">?</text></svg><svg style="position:absolute;left:12px;top:65px;" width="14" height="12" viewBox="0 0 14 12"><path d="M1 6H13M6 1L1 6L6 11" fill="none" stroke="#777" stroke-width="1.6"/></svg><svg style="position:absolute;left:42px;top:65px;" width="14" height="12" viewBox="0 0 14 12"><path d="M1 6H13M8 1L13 6L8 11" fill="none" stroke="#ccc" stroke-width="1.6"/></svg><svg style="position:absolute;left:68px;top:68px;" width="9" height="6" viewBox="0 0 9 6"><path d="M1 1L4.5 4.5L8 1" fill="none" stroke="#777" stroke-width="1.3"/></svg><svg style="position:absolute;left:86px;top:65px;" width="13" height="13" viewBox="0 0 13 13"><path d="M6.5 13V1.5M1 7L6.5 1.5L12 7" fill="none" stroke="#777" stroke-width="1.6"/></svg><div style="position:absolute;left:106px;top:60px;width:790px;height:22px;border:1px solid #d9d9d9;box-sizing:border-box"></div><div style="position:absolute;left:877px;top:60px;width:1px;height:22px;background:#d9d9d9"></div><svg style="position:absolute;left:862px;top:67px;" width="10" height="8" viewBox="0 0 10 8"><path d="M1 1.5L5 5.5L9 1.5" fill="none" stroke="#555" stroke-width="1.5"/></svg><svg style="position:absolute;left:880px;top:64px;" width="14" height="14" viewBox="0 0 14 14"><path d="M10.5 4A4.5 4.5 0 1 1 7 2.5" fill="none" stroke="#666" stroke-width="1.5"/><path d="M6 0L9.5 2.5L6 5Z" fill="#666"/></svg><svg style="position:absolute;left:111px;top:62px;" width="14" height="17" viewBox="0 0 14 17"><defs><linearGradient id="fg" x1="0" y1="0" x2="1" y2="1"><stop offset="0" stop-color="#fff0b8"/><stop offset="1" stop-color="#fcd977"/></linearGradient></defs><rect x="0.5" y="0.5" width="11.5" height="15" fill="url(#fg)" stroke="#e3b74c"/><rect x="9.5" y="8.5" width="3" height="7" fill="#fbdc7e" stroke="#e3b74c"/></svg><svg style="position:absolute;left:130.5px;top:66px;" width="6" height="9" viewBox="0 0 6 9"><path d="M1 1L4.5 4.5L1 8" fill="none" stroke="#777" stroke-width="1.5"/></svg><div class="t" style="left:146.50px;top:62.84px;font-size:12px;line-height:14px;color:#000;letter-spacing:-0.413px;">This PC</div><svg style="position:absolute;left:193.5px;top:66px;" width="6" height="9" viewBox="0 0 6 9"><path d="M1 1L4.5 4.5L1 8" fill="none" stroke="#777" stroke-width="1.5"/></svg><div class="t" style="left:209.00px;top:62.84px;font-size:12px;line-height:14px;color:#000;">Local Disk (C:)</div><svg style="position:absolute;left:291.5px;top:66px;" width="6" height="9" viewBox="0 0 6 9"><path d="M1 1L4.5 4.5L1 8" fill="none" stroke="#777" stroke-width="1.5"/></svg><div class="t" style="left:307.00px;top:62.84px;font-size:12px;line-height:14px;color:#000;">Users</div><svg style="position:absolute;left:341.5px;top:66px;" width="6" height="9" viewBox="0 0 6 9"><path d="M1 1L4.5 4.5L1 8" fill="none" stroke="#777" stroke-width="1.5"/></svg><div class="t" style="left:358.00px;top:62.84px;font-size:12px;line-height:14px;color:#000;">jegan</div><svg style="position:absolute;left:394.5px;top:66px;" width="6" height="9" viewBox="0 0 6 9"><path d="M1 1L4.5 4.5L1 8" fill="none" stroke="#777" stroke-width="1.5"/></svg><div class="t" style="left:410.00px;top:62.84px;font-size:12px;line-height:14px;color:#000;">googletest</div><svg style="position:absolute;left:473.5px;top:66px;" width="6" height="9" viewBox="0 0 6 9"><path d="M1 1L4.5 4.5L1 8" fill="none" stroke="#777" stroke-width="1.5"/></svg><div style="position:absolute;left:909px;top:60px;width:202px;height:22px;border:1px solid #d9d9d9;box-sizing:border-box"></div><div class="t" style="left:918.00px;top:63.84px;font-size:12px;line-height:14px;color:#6d6d6d;letter-spacing:-0.161px;">Search googletest</div><svg style="position:absolute;left:1090px;top:65px;" width="13" height="13" viewBox="0 0 13 13"><circle cx="7.5" cy="5.5" r="4" fill="none" stroke="#555" stroke-width="1.4"/><path d="M4.5 8.5L1 12" stroke="#555" stroke-width="1.8"/></svg><div style="position:absolute;left:0px;top:89px;width:140px;height:471px;overflow:hidden"><svg style="position:absolute;left:22px;top:20px;" width="18" height="14" viewBox="0 0 18 14"><path d="M11 0.5L12.9 4.6L17.5 5L14 8.2L15.2 12.8L11 10.4L6.8 12.8L7.9 8.2L4.5 5L9.1 4.6Z" fill="#2a8ee8"/><path d="M2 6.5H5.5M3 9H6.5M4 11.5H7" stroke="#7cbdf2" stroke-width="1"/></svg><div class="t" style="left:45.00px;top:20.84px;font-size:12px;line-height:14px;color:#000;letter-spacing:-0.280px;">Quick access</div><svg style="position:absolute;left:32px;top:46px;" width="16" height="12" viewBox="0 0 16 12"><defs><linearGradient id="dg" x1="0" y1="0" x2="1" y2="1"><stop offset="0" stop-color="#1aa0f5"/><stop offset="0.5" stop-color="#3bb4ff"/><stop offset="1" stop-color="#1483e0"/></linearGradient></defs><rect x="0" y="0" width="16" height="12" fill="#0e6cc2"/><rect x="1" y="1" width="14" height="9" fill="url(#dg)"/><rect x="1" y="10" width="1" height="1" fill="#fff"/><rect x="13" y="10" width="1" height="1" fill="#fff"/></svg><div class="t" style="left:53.00px;top:44.84px;font-size:12px;line-height:14px;color:#000;letter-spacing:-0.247px;">Desktop</div><svg style="position:absolute;left:126px;top:45px;" width="12" height="12" viewBox="0 0 12 12"><path d="M7 0.5L11.5 5L10 5.5L8 7.5L8.5 10L7.5 10.5L1.5 4.5L2 3.5L4.5 4L6.5 2Z" fill="#8a9299"/><path d="M4.5 7.5L0.5 11.5" stroke="#8a9299" stroke-width="1.4"/></svg><svg style="position:absolute;left:32px;top:68px;" width="16" height="16" viewBox="0 0 16 16"><path d="M5.5 0H10.5V8H16L8 16L0 8H5.5Z" fill="#3b8ee6"/></svg><div class="t" style="left:53.00px;top:68.84px;font-size:12px;line-height:14px;color:#000;letter-spacing:-0.086px;">Downloads</div><svg style="position:absolute;left:126px;top:69px;" width="12" height="12" viewBox="0 0 12 12"><path d="M7 0.5L11.5 5L10 5.5L8 7.5L8.5 10L7.5 10.5L1.5 4.5L2 3.5L4.5 4L6.5 2Z" fill="#8a9299"/><path d="M4.5 7.5L0.5 11.5" stroke="#8a9299" stroke-width="1.4"/></svg><svg style="position:absolute;left:34px;top:92px;" width="12" height="16" viewBox="0 0 12 16"><path d="M0.5 0.5H8.5L11.5 3.5V15.5H0.5Z" fill="#fff" stroke="#7d7d7d"/><path d="M8.5 0.5V3.5H11.5" fill="none" stroke="#9d9d9d"/><path d="M2 6L3.5 2L5 6M2.5 4.8H4.5" fill="none" stroke="#2b7fd4" stroke-width="1"/><path d="M5.5 4.5H10M5.5 6.5H10M2 8.5H10M2 10.5H5M2 12.5H10" stroke="#6a8fb8" stroke-width="1"/><rect x="6" y="10" width="4" height="2" fill="#4d7a58"/></svg><div class="t" style="left:53.00px;top:92.84px;font-size:12px;line-height:14px;color:#000;letter-spacing:-0.023px;">Documents</div><svg style="position:absolute;left:126px;top:93px;" width="12" height="12" viewBox="0 0 12 12"><path d="M7 0.5L11.5 5L10 5.5L8 7.5L8.5 10L7.5 10.5L1.5 4.5L2 3.5L4.5 4L6.5 2Z" fill="#8a9299"/><path d="M4.5 7.5L0.5 11.5" stroke="#8a9299" stroke-width="1.4"/></svg><svg style="position:absolute;left:32px;top:118px;" width="16" height="12" viewBox="0 0 16 12"><rect x="0.5" y="0.5" width="15" height="11" fill="#fff" stroke="#8a8a8a"/><defs><linearGradient id="pg" x1="0" y1="0" x2="0" y2="1"><stop offset="0" stop-color="#5aa6e8"/><stop offset="0.45" stop-color="#d8ecf8"/><stop offset="0.6" stop-color="#5a8c4a"/><stop offset="1" stop-color="#2f5a7a"/></linearGradient></defs><rect x="2" y="2" width="12" height="8" fill="url(#pg)"/></svg><div class="t" style="left:53.00px;top:116.84px;font-size:12px;line-height:14px;color:#000;letter-spacing:-0.207px;">Pictures</div><svg style="position:absolute;left:126px;top:117px;" width="12" height="12" viewBox="0 0 12 12"><path d="M7 0.5L11.5 5L10 5.5L8 7.5L8.5 10L7.5 10.5L1.5 4.5L2 3.5L4.5 4L6.5 2Z" fill="#8a9299"/><path d="M4.5 7.5L0.5 11.5" stroke="#8a9299" stroke-width="1.4"/></svg><svg style="position:absolute;left:32px;top:142px;" width="16" height="13" viewBox="0 0 16 13"><path d="M0 1H6L7 2H16V13H0Z" fill="#6ccaf2"/><rect x="0" y="3" width="16" height="10" fill="#7fd3f7"/><circle cx="8" cy="7" r="2" fill="none" stroke="#3aa0d0" stroke-width="1"/><path d="M8 9V12M6 12H10" stroke="#3aa0d0"/></svg><div class="t" style="left:53.00px;top:140.84px;font-size:12px;line-height:14px;color:#000;">Dropbox (Ma</div><svg style="position:absolute;left:126px;top:141px;" width="12" height="12" viewBox="0 0 12 12"><path d="M7 0.5L11.5 5L10 5.5L8 7.5L8.5 10L7.5 10.5L1.5 4.5L2 3.5L4.5 4L6.5 2Z" fill="#8a9299"/><path d="M4.5 7.5L0.5 11.5" stroke="#8a9299" stroke-width="1.4"/></svg><svg style="position:absolute;left:33px;top:164px;" width="14" height="17" viewBox="0 0 14 17"><defs><linearGradient id="fg" x1="0" y1="0" x2="1" y2="1"><stop offset="0" stop-color="#fff0b8"/><stop offset="1" stop-color="#fcd977"/></linearGradient></defs><rect x="0.5" y="0.5" width="11.5" height="15" fill="url(#fg)" stroke="#e3b74c"/><rect x="9.5" y="8.5" width="3" height="7" fill="#fbdc7e" stroke="#e3b74c"/></svg><div class="t" style="left:53.00px;top:164.84px;font-size:12px;line-height:14px;color:#000;letter-spacing:0.211px;">MobileApp</div><svg style="position:absolute;left:33px;top:188px;" width="14" height="17" viewBox="0 0 14 17"><defs><linearGradient id="fg" x1="0" y1="0" x2="1" y2="1"><stop offset="0" stop-color="#fff0b8"/><stop offset="1" stop-color="#fcd977"/></linearGradient></defs><rect x="0.5" y="0.5" width="11.5" height="15" fill="url(#fg)" stroke="#e3b74c"/><rect x="9.5" y="8.5" width="3" height="7" fill="#fbdc7e" stroke="#e3b74c"/></svg><div class="t" style="left:53.00px;top:188.84px;font-size:12px;line-height:14px;color:#000;letter-spacing:-0.205px;">RPNCalculator</div><svg style="position:absolute;left:33px;top:212px;" width="14" height="17" viewBox="0 0 14 17"><defs><linearGradient id="fg" x1="0" y1="0" x2="1" y2="1"><stop offset="0" stop-color="#fff0b8"/><stop offset="1" stop-color="#fcd977"/></linearGradient></defs><rect x="0.5" y="0.5" width="11.5" height="15" fill="url(#fg)" stroke="#e3b74c"/><rect x="9.5" y="8.5" width="3" height="7" fill="#fbdc7e" stroke="#e3b74c"/></svg><div class="t" style="left:53.00px;top:212.84px;font-size:12px;line-height:14px;color:#000;letter-spacing:-0.433px;">src</div><svg style="position:absolute;left:33px;top:236px;" width="14" height="17" viewBox="0 0 14 17"><defs><linearGradient id="fg" x1="0" y1="0" x2="1" y2="1"><stop offset="0" stop-color="#fff0b8"/><stop offset="1" stop-color="#fcd977"/></linearGradient></defs><rect x="0.5" y="0.5" width="11.5" height="15" fill="url(#fg)" stroke="#e3b74c"/><rect x="9.5" y="8.5" width="3" height="7" fill="#fbdc7e" stroke="#e3b74c"/></svg><div class="t" style="left:53.00px;top:236.84px;font-size:12px;line-height:14px;color:#000;letter-spacing:-0.433px;">src</div><svg style="position:absolute;left:24px;top:271px;" width="17" height="11" viewBox="0 0 17 11"><g fill="#1a78d4"><circle cx="5" cy="6" r="3.2"/><circle cx="2.3" cy="8" r="2.1"/><rect x="2.3" y="7" width="6" height="3.1"/></g><g fill="#fff"><circle cx="10.5" cy="5" r="5.5"/><circle cx="7.2" cy="8" r="3"/></g><g fill="#1a78d4"><circle cx="10.5" cy="5.2" r="4.5"/><circle cx="14" cy="7.4" r="2.7"/><circle cx="7.4" cy="8" r="2.1"/><rect x="7.4" y="6.5" width="6.6" height="3.6"/></g></svg><div class="t" style="left:45.00px;top:268.84px;font-size:12px;line-height:14px;color:#000;letter-spacing:-0.286px;">OneDrive</div><svg style="position:absolute;left:24px;top:301px;" width="16" height="15" viewBox="0 0 16 15"><rect x="0.5" y="0.5" width="15" height="10" fill="#52c0f8" stroke="#8c99a3"/><path d="M8 11V13" stroke="#8c99a3"/><path d="M4 13.5H12" stroke="#8c99a3"/><path d="M0 14.5H16" stroke="#b8c2c9"/></svg><div class="t" style="left:45.00px;top:300.84px;font-size:12px;line-height:14px;color:#000;letter-spacing:-0.413px;">This PC</div><svg style="position:absolute;left:32px;top:326px;" width="16" height="12" viewBox="0 0 16 12"><defs><linearGradient id="dg" x1="0" y1="0" x2="1" y2="1"><stop offset="0" stop-color="#1aa0f5"/><stop offset="0.5" stop-color="#3bb4ff"/><stop offset="1" stop-color="#1483e0"/></linearGradient></defs><rect x="0" y="0" width="16" height="12" fill="#0e6cc2"/><rect x="1" y="1" width="14" height="9" fill="url(#dg)"/><rect x="1" y="10" width="1" height="1" fill="#fff"/><rect x="13" y="10" width="1" height="1" fill="#fff"/></svg><div class="t" style="left:53.00px;top:324.84px;font-size:12px;line-height:14px;color:#000;letter-spacing:-0.247px;">Desktop</div><svg style="position:absolute;left:34px;top:348px;" width="12" height="16" viewBox="0 0 12 16"><path d="M0.5 0.5H8.5L11.5 3.5V15.5H0.5Z" fill="#fff" stroke="#7d7d7d"/><path d="M8.5 0.5V3.5H11.5" fill="none" stroke="#9d9d9d"/><path d="M2 6L3.5 2L5 6M2.5 4.8H4.5" fill="none" stroke="#2b7fd4" stroke-width="1"/><path d="M5.5 4.5H10M5.5 6.5H10M2 8.5H10M2 10.5H5M2 12.5H10" stroke="#6a8fb8" stroke-width="1"/><rect x="6" y="10" width="4" height="2" fill="#4d7a58"/></svg><div class="t" style="left:53.00px;top:348.84px;font-size:12px;line-height:14px;color:#000;letter-spacing:-0.023px;">Documents</div><svg style="position:absolute;left:32px;top:372px;" width="16" height="16" viewBox="0 0 16 16"><path d="M5.5 0H10.5V8H16L8 16L0 8H5.5Z" fill="#3b8ee6"/></svg><div class="t" style="left:53.00px;top:372.84px;font-size:12px;line-height:14px;color:#000;letter-spacing:-0.086px;">Downloads</div></div><div style="position:absolute;left:140px;top:89px;width:16px;height:431px;background:#f0f0f0"></div><div style="position:absolute;left:140px;top:106px;width:15px;height:327px;background:#cdcdcd"></div><svg style="position:absolute;left:144px;top:94px;" width="8" height="6" viewBox="0 0 8 6"><path d="M1 5L4 1.5L7 5" fill="none" stroke="#505050" stroke-width="1.4"/></svg><div style="position:absolute;left:158px;top:89px;width:1px;height:431px;background:#f0f0f0"></div><div class="t" style="left:177.00px;top:94.84px;font-size:12px;line-height:14px;color:#4c607a;">Name</div><div style="position:absolute;left:431px;top:89px;width:1px;height:25px;background:#e5e5e5"></div><div class="t" style="left:438.50px;top:94.84px;font-size:12px;line-height:14px;color:#4c607a;">Date modified</div><div style="position:absolute;left:551px;top:89px;width:1px;height:25px;background:#e5e5e5"></div><div class="t" style="left:558.50px;top:94.84px;font-size:12px;line-height:14px;color:#4c607a;letter-spacing:-0.379px;">Type</div><div style="position:absolute;left:671px;top:89px;width:1px;height:25px;background:#e5e5e5"></div><div class="t" style="left:678.00px;top:94.84px;font-size:12px;line-height:14px;color:#4c607a;letter-spacing:-0.836px;">Size</div><div style="position:absolute;left:751px;top:89px;width:1px;height:25px;background:#e5e5e5"></div><svg style="position:absolute;left:280px;top:89px;" width="10" height="6" viewBox="0 0 10 6"><path d="M1 5L5 1L9 5" fill="none" stroke="#8a8a8a" stroke-width="1"/></svg><svg style="position:absolute;left:180px;top:122px;" width="14" height="17" viewBox="0 0 14 17"><defs><linearGradient id="fg" x1="0" y1="0" x2="1" y2="1"><stop offset="0" stop-color="#fff0b8"/><stop offset="1" stop-color="#fcd977"/></linearGradient></defs><rect x="0.5" y="0.5" width="11.5" height="15" fill="url(#fg)" stroke="#e3b74c"/><rect x="9.5" y="8.5" width="3" height="7" fill="#fbdc7e" stroke="#e3b74c"/></svg><div class="t" style="left:198.00px;top:123.84px;font-size:12px;line-height:14px;color:#000;letter-spacing:0.188px;">googlemock</div><div class="t" style="left:438.50px;top:123.84px;font-size:12px;line-height:14px;color:#6d6d6d;letter-spacing:-0.137px;">11/26/16 2:52 AM</div><div class="t" style="left:558.50px;top:123.84px;font-size:12px;line-height:14px;color:#6d6d6d;letter-spacing:-0.108px;">File folder</div><svg style="position:absolute;left:180px;top:143px;" width="14" height="17" viewBox="0 0 14 17"><defs><linearGradient id="fg" x1="0" y1="0" x2="1" y2="1"><stop offset="0" stop-color="#fff0b8"/><stop offset="1" stop-color="#fcd977"/></linearGradient></defs><rect x="0.5" y="0.5" width="11.5" height="15" fill="url(#fg)" stroke="#e3b74c"/><rect x="9.5" y="8.5" width="3" height="7" fill="#fbdc7e" stroke="#e3b74c"/></svg><div class="t" style="left:198.00px;top:144.84px;font-size:12px;line-height:14px;color:#000;">googletest</div><div class="t" style="left:438.50px;top:144.84px;font-size:12px;line-height:14px;color:#6d6d6d;letter-spacing:-0.137px;">11/26/16 2:52 AM</div><div class="t" style="left:558.50px;top:144.84px;font-size:12px;line-height:14px;color:#6d6d6d;letter-spacing:-0.108px;">File folder</div><svg style="position:absolute;left:178px;top:164px;" width="16" height="16" viewBox="0 0 16 16"><rect x="1" y="1" width="14" height="14" rx="2.5" fill="#fff" stroke="#1787d6" stroke-width="2"/><path d="M6.8 4.5H4.5V11.5H6.8M9.2 4.5H11.5V11.5H9.2" fill="none" stroke="#2b2b2b" stroke-width="2"/></svg><div class="t" style="left:198.00px;top:165.84px;font-size:12px;line-height:14px;color:#000;letter-spacing:-0.202px;">.travis</div><div class="t" style="left:438.50px;top:165.84px;font-size:12px;line-height:14px;color:#6d6d6d;letter-spacing:-0.139px;">11/24/15 10:51 AM</div><div class="t" style="left:558.50px;top:165.84px;font-size:12px;line-height:14px;color:#6d6d6d;letter-spacing:-0.301px;">YML File</div><div class="t" style="left:721.50px;top:165.84px;font-size:12px;line-height:14px;color:#6d6d6d;letter-spacing:-0.879px;">2 KB</div><svg style="position:absolute;left:181px;top:185px;" width="13" height="16" viewBox="0 0 13 16"><path d="M0.5 0.5H8.5L12.5 4.5V15.5H0.5Z" fill="#fff" stroke="#8c8c8c"/><path d="M8.5 0.5V4.5H12.5" fill="none" stroke="#8c8c8c"/><path d="M3 5.5H7M3 7.5H10M3 9.5H10M3 11.5H10M3 13.5H10" stroke="#9a9a9a" stroke-width="1"/></svg><div class="t" style="left:198.00px;top:186.84px;font-size:12px;line-height:14px;color:#000;letter-spacing:-0.299px;">CMakeLists</div><div class="t" style="left:438.50px;top:186.84px;font-size:12px;line-height:14px;color:#6d6d6d;letter-spacing:-0.139px;">11/24/15 10:51 AM</div><div class="t" style="left:558.50px;top:186.84px;font-size:12px;line-height:14px;color:#6d6d6d;letter-spacing:-0.081px;">Text Document</div><div class="t" style="left:721.50px;top:186.84px;font-size:12px;line-height:14px;color:#6d6d6d;letter-spacing:-0.879px;">1 KB</div><svg style="position:absolute;left:178px;top:206px;" width="16" height="16" viewBox="0 0 16 16"><rect x="1" y="1" width="14" height="14" rx="2.5" fill="#fff" stroke="#1787d6" stroke-width="2"/><path d="M6.8 4.5H4.5V11.5H6.8M9.2 4.5H11.5V11.5H9.2" fill="none" stroke="#2b2b2b" stroke-width="2"/></svg><div class="t" style="left:198.00px;top:207.84px;font-size:12px;line-height:14px;color:#000;letter-spacing:-0.924px;">README</div><div class="t" style="left:438.50px;top:207.84px;font-size:12px;line-height:14px;color:#6d6d6d;letter-spacing:-0.139px;">11/24/15 10:51 AM</div><div class="t" style="left:558.50px;top:207.84px;font-size:12px;line-height:14px;color:#6d6d6d;letter-spacing:-0.263px;">MD File</div><div class="t" style="left:721.50px;top:207.84px;font-size:12px;line-height:14px;color:#6d6d6d;letter-spacing:-0.879px;">5 KB</div><svg style="position:absolute;left:178px;top:227px;" width="16" height="16" viewBox="0 0 16 16"><rect x="1" y="1" width="14" height="14" rx="2.5" fill="#fff" stroke="#1787d6" stroke-width="2"/><path d="M6.8 4.5H4.5V11.5H6.8M9.2 4.5H11.5V11.5H9.2" fill="none" stroke="#2b2b2b" stroke-width="2"/></svg><div class="t" style="left:198.00px;top:228.84px;font-size:12px;line-height:14px;color:#000;letter-spacing:-0.145px;">travis</div><div class="t" style="left:438.50px;top:228.84px;font-size:12px;line-height:14px;color:#6d6d6d;letter-spacing:-0.139px;">11/24/15 10:51 AM</div><div class="t" style="left:558.50px;top:228.84px;font-size:12px;line-height:14px;color:#6d6d6d;letter-spacing:-0.549px;">SH File</div><div class="t" style="left:721.50px;top:228.84px;font-size:12px;line-height:14px;color:#6d6d6d;letter-spacing:-0.879px;">1 KB</div></div><div style="position:absolute;left:0px;top:860px;width:1440px;height:40px;background:#262626"></div><div style="position:absolute;left:0px;top:860px;width:48px;height:40px;background:#020408"></div><svg style="position:absolute;left:15px;top:872px;" width="17" height="17" viewBox="0 0 17 17"><path d="M0 2.3L7 1.3V7.6H0Z M8 1.1L17 0V7.6H8Z M0 8.6H7V14.9L0 13.9Z M8 8.6H17V16.2L8 15Z" fill="#fff"/></svg><div style="position:absolute;left:48px;top:860px;width:344px;height:40px;background:#333333"></div><svg style="position:absolute;left:56px;top:869px;" width="23" height="23" viewBox="0 0 23 23"><circle cx="11.5" cy="11.5" r="9.5" fill="none" stroke="#fff" stroke-width="2.2"/></svg><div class="t" style="left:85.00px;top:871.80px;font-size:15px;line-height:18px;color:#a8a8a8;letter-spacing:-0.259px;">Ask me anything</div><svg style="position:absolute;left:364px;top:869px;" width="16" height="22" viewBox="0 0 16 22"><rect x="4.5" y="2.5" width="7" height="12" rx="1" fill="none" stroke="#9a9a9a" stroke-width="1.2"/><path d="M2.5 11V13C2.5 15.5 4.5 17 8 17C11.5 17 13.5 15.5 13.5 13V11M8 17V19.5M4.5 19.5H11.5" fill="none" stroke="#9a9a9a" stroke-width="1.2"/></svg><svg style="position:absolute;left:405px;top:872px;" width="22" height="16" viewBox="0 0 22 16"><rect x="5.5" y="1.5" width="11" height="13" fill="none" stroke="#fff" stroke-width="1.4"/><path d="M3.5 3.5H1.5V12.5H3.5M18.5 3.5H20.5V12.5H18.5" fill="none" stroke="#fff" stroke-width="1.3"/></svg><svg style="position:absolute;left:456px;top:868px;" width="22" height="23" viewBox="0 0 22 23"><path d="M21 13.5H6.5C6.8 17.5 9.5 19.8 13.5 19.8C16.3 19.8 18.6 18.9 20.5 17.6V21.3C18.5 22.4 15.8 23 12.8 23C6 23 1.8 18.8 1.8 12.6C1.8 9.5 3 6.8 5 4.8C3.5 7 3 9 3.4 10.5C4.2 7.4 7.5 4.8 11 4.8C14.5 4.8 16 6.8 16 9.5H6.8C7.5 6.5 9.5 5 11.5 5" fill="none"/><path d="M0.8 9.5C2 4 6.5 0.5 12 0.5C18 0.5 21.5 5 21.5 10.5V13.5H6.8C7 17.3 9.7 19.6 13.6 19.6C16.4 19.6 18.7 18.8 20.7 17.4V21.3C18.6 22.5 15.9 23 12.9 23C6.1 23 2 18.7 2 12.8C2 9 4 6 7.2 4.5C5.3 5.8 4 7.5 3.5 9.5C4.5 8 6.5 7 8.8 7C11.5 7 13.8 7.6 15.5 9.5L16.2 9.5C15.8 6.5 14 4.6 11 4.6C6.5 4.6 2.8 6.8 0.8 9.5Z M6.8 10.2H16.3C16.2 8.2 14.8 7 12.2 7C9.5 7 7.3 8.2 6.8 10.2Z" fill="#1e7ad6" fill-rule="evenodd"/></svg><div style="position:absolute;left:492px;top:860px;width:44px;height:40px;background:#505050"></div><div style="position:absolute;left:536px;top:860px;width:4px;height:40px;background:#3c3c3c"></div><div style="position:absolute;left:492px;top:898px;width:44px;height:2px;background:#76b9ed"></div><div style="position:absolute;left:537px;top:898px;width:3px;height:2px;background:#76b9ed"></div><svg style="position:absolute;left:505px;top:871px;" width="22" height="18" viewBox="0 0 22 18"><path d="M0 1H7L8 2.5H21V17H0Z" fill="#f7d66e"/><rect x="0" y="3.5" width="21" height="13.5" fill="#fde28d"/><rect x="1" y="1.5" width="5" height="1.5" fill="#8fd0f5"/><path d="M5 17V10.5H16V17H13V13.5H8V17Z" fill="#2a96dc"/></svg><svg style="position:absolute;left:553px;top:868px;" width="23" height="24" viewBox="0 0 23 24"><path d="M7 6C7 2 9 0.8 11.5 0.8C14 0.8 16 2 16 6" fill="none" stroke="#fff" stroke-width="1.6"/><path d="M1 6H22V23L1 21Z" fill="#fff"/><path d="M6.5 10H11V14H6.5ZM12 10H16.5V14H12ZM6.5 15H11V19H6.5ZM12 15H16.5V19H12Z" fill="#202020"/></svg><svg style="position:absolute;left:603px;top:868px;" width="22" height="24" viewBox="0 0 22 24"><path d="M17.5 2.5V21.5L2.5 7.5V16.5L17.5 2.5Z" fill="#68217a" stroke="#68217a" stroke-width="5" stroke-linejoin="round"/><path d="M0 15H4L19 24H0Z" fill="#68217a"/><path d="M15 1L19 0L22 1.5V24H15Z" fill="#68217a"/><path d="M17.5 2.5V21.5L2.5 7.5V16.5L17.5 2.5Z" fill="none" stroke="#fff" stroke-width="2.6" stroke-linejoin="round"/></svg><div style="position:absolute;left:594px;top:898px;width:40px;height:2px;background:#76b9ed"></div><svg style="position:absolute;left:651px;top:870px;" width="23" height="19" viewBox="0 0 23 19"><rect x="0.5" y="0.5" width="22" height="18" fill="#000" stroke="#bbb"/><rect x="1" y="1" width="21" height="2" fill="#ccc"/><text x="3" y="9" font-family="Liberation Mono" font-size="5" fill="#ddd">C:\&gt;_</text><path d="M11 9H19" stroke="#ddd"/></svg><div style="position:absolute;left:643px;top:898px;width:40px;height:2px;background:#76b9ed"></div><svg style="position:absolute;left:1236px;top:875px;" width="13" height="9" viewBox="0 0 13 9"><path d="M1 7.5L6.5 2L12 7.5" fill="none" stroke="#fff" stroke-width="1.2"/></svg><svg style="position:absolute;left:1257px;top:874px;" width="18" height="13" viewBox="0 0 18 13"><path d="M4 0V3M7 0V3M3 3H8V6C8 7.5 7 8.5 5.5 8.5C4 8.5 3 7.5 3 6Z M5.5 8.5V12" fill="none" stroke="#fff" stroke-width="1"/><rect x="6.5" y="3.5" width="10" height="7" fill="none" stroke="#fff"/><rect x="16.5" y="5.5" width="1.5" height="3" fill="#fff"/></svg><svg style="position:absolute;left:1282px;top:873px;" width="17" height="15" viewBox="0 0 17 15"><rect x="2.5" y="1.5" width="14" height="9" fill="none" stroke="#fff"/><path d="M9.5 10.5V13M5 13.5H14M0.5 1.5V13" stroke="#fff"/><rect x="0" y="1" width="4" height="3" fill="#fff"/></svg><svg style="position:absolute;left:1306px;top:873px;" width="17" height="15" viewBox="0 0 17 15"><path d="M1 5H4L8 1.5V13.5L4 10H1Z" fill="none" stroke="#fff"/><path d="M10.5 4.5C11.5 6 11.5 9 10.5 10.5M12.5 2.8C14.2 5 14.2 10 12.5 12.2M14.5 1C17 4 17 11 14.5 14" fill="none" stroke="#fff"/></svg><div class="t" style="left:1332.70px;top:863.84px;font-size:12px;line-height:14px;color:#fff;letter-spacing:-0.597px;">12:42 PM</div><div class="t" style="left:1333.50px;top:881.34px;font-size:12px;line-height:14px;color:#fff;letter-spacing:-0.104px;">12/11/16</div><div style="position:absolute;left:1380px;top:860px;width:56px;height:40px;background:#020408"></div><div style="position:absolute;left:1435px;top:862px;width:1px;height:36px;background:#555"></div><svg style="position:absolute;left:1398px;top:871px;" width="26" height="24" viewBox="0 0 26 24"><path d="M1 1H17V13H7L4 16V13H1Z" fill="#fff"/><path d="M4 4H14M4 7H14M4 10H11" stroke="#000" stroke-width="1"/><circle cx="16" cy="16" r="7.5" fill="#1a1a1a" stroke="#666" stroke-width="1"/><text x="16" y="20" text-anchor="middle" font-family="Liberation Sans" font-size="11" fill="#fff">3</text></svg>
</body></html>
